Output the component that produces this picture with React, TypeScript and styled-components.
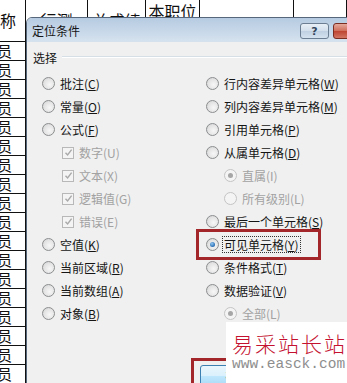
import React from "react";
import styled, { createGlobalStyle, css } from "styled-components";

const GlobalStyle = createGlobalStyle`
  html, body { margin: 0; padding: 0; background: #fff; }
  body { font-family: "Noto Sans CJK SC", "Noto Sans", sans-serif; }
`;

const Page = styled.div`
  position: relative;
  width: 347px;
  height: 383px;
  overflow: hidden;
  background: #fff;
`;

/* spreadsheet behind the dialog */
const Sheet = styled.div`
  display: grid;
  grid-template-columns: 26px 62px 58px 54px 94px 1fr;
  grid-template-rows: 42px;
  grid-auto-rows: 19px;
`;

const Cell = styled.div<{ $head?: boolean; $left?: boolean }>`
  box-sizing: border-box;
  border-right: 1px solid #111;
  border-bottom: 1px solid #111;
  overflow: hidden;
  white-space: nowrap;
  color: #111;
  font-size: 15px;
  line-height: 18px;
  text-indent: -3px;
  ${(p) =>
    p.$head &&
    css`
      display: flex;
      flex-direction: column;
      justify-content: center;
      align-items: ${p.$left ? "flex-start" : "center"};
      font-size: 16px;
      line-height: 19px;
      text-indent: 0;
    `}
`;

/* the dialog */
const Dialog = styled.div`
  position: absolute;
  left: 26px;
  top: 17px;
  width: 352px;
  height: 400px;
  box-sizing: border-box;
  border: 1px solid #56677b;
  border-radius: 6px 6px 0 0;
  background: #f0f0f0;
  display: flex;
  flex-direction: column;
`;

const TitleBar = styled.div`
  height: 24px;
  display: flex;
  align-items: flex-start;
  gap: 4px;
  padding: 0 1px 0 5px;
  border-radius: 5px 5px 0 0;
  background: linear-gradient(#b6cbe1, #c9d9ea 60%, #d6e2ee);
`;

const Title = styled.div`
  flex: 1;
  margin-top: 6px;
  font-size: 12px;
  line-height: 14px;
  color: #151515;
`;

const CaptionButton = styled.div<{ $close?: boolean }>`
  margin-top: 5px;
  width: ${(p) => (p.$close ? 43 : 29)}px;
  height: 16px;
  box-sizing: border-box;
  border: 1px solid ${(p) => (p.$close ? "#7b2d22" : "#6c7e92")};
  border-radius: 3px;
  display: flex;
  align-items: center;
  justify-content: center;
  font-family: "DejaVu Sans", sans-serif;
  font-size: 11px;
  font-weight: bold;
  color: #33465c;
  background: ${(p) =>
    p.$close
      ? "linear-gradient(#e4a99b, #cf6d5a 50%, #bd4330 50%, #d27563)"
      : "linear-gradient(#e8eff6, #d2dfec 50%, #bfd0e2 50%, #d5e2ef)"};
`;

const Body = styled.div`
  flex: 1;
  padding-top: 8px;
`;

const GroupHead = styled.div`
  display: flex;
  align-items: center;
  gap: 5px;
  height: 14px;
  padding-left: 6px;
  font-size: 12px;
  color: #151515;
  &::after {
    content: "";
    flex: 1;
    border-top: 1px solid #d5dfe5;
    border-bottom: 1px solid #fff;
  }
`;

const Options = styled.div`
  display: flex;
  margin-top: 8px;
  padding-left: 15px;
`;

const Column = styled.div<{ $width?: number }>`
  display: flex;
  flex-direction: column;
  width: ${(p) => (p.$width ? `${p.$width}px` : "auto")};
`;

const Option = styled.div<{ $indent?: number; $disabled?: boolean; $marked?: boolean }>`
  position: relative;
  height: 23px;
  display: flex;
  align-items: center;
  gap: 5px;
  padding-left: ${(p) => p.$indent ?? 0}px;
  font-size: 12px;
  line-height: 15px;
  white-space: nowrap;
  color: ${(p) => (p.$disabled ? "#a2a2a2" : "#151515")};
  ${(p) =>
    p.$marked &&
    css`
      &::before {
        content: "";
        position: absolute;
        left: -10px;
        top: -4px;
        width: 125px;
        height: 31px;
        box-sizing: border-box;
        border: 3px solid #a3262b;
      }
    `}
`;

const Radio = styled.span<{ $checked?: boolean; $disabled?: boolean }>`
  position: relative;
  flex: none;
  width: 13px;
  height: 13px;
  box-sizing: border-box;
  border-radius: 50%;
  border: 1px solid ${(p) => (p.$disabled ? "#c4c4c4" : "#8b8d8f")};
  background: ${(p) =>
    p.$disabled
      ? "#f4f4f4"
      : "radial-gradient(circle at 60% 60%, #f7f7f7 0, #e4e4e4 55%, #cfcfcf 100%)"};
  ${(p) =>
    p.$checked &&
    css`
      &::after {
        content: "";
        position: absolute;
        left: 3px;
        top: 3px;
        width: 5px;
        height: 5px;
        border-radius: 50%;
        background: ${p.$disabled
          ? "#a6a6a6"
          : "radial-gradient(circle at 40% 35%, #8fc6f2, #2a6db3 70%, #1c4f8a)"};
      }
    `}
`;

const CheckBox = styled.span`
  flex: none;
  width: 12px;
  height: 12px;
  box-sizing: border-box;
  border: 1px solid #b8b8b8;
  background: #f4f4f4;
  display: flex;
  align-items: center;
  justify-content: center;
`;

const Label = styled.span<{ $focused?: boolean }>`
  ${(p) =>
    p.$focused &&
    css`
      margin-left: -2px;
      padding: 0 1px;
      border: 1px dotted #333;
    `}
`;

const Key = styled.span`
  text-decoration: underline;
  text-underline-offset: 1px;
`;

const ButtonRow = styled.div`
  display: flex;
  margin-top: 33px;
  padding-left: 164px;
`;

const RedFrame = styled.div`
  border: 3px solid #a3262b;
  padding: 4px 6px;
`;

const PushButton = styled.div`
  width: 75px;
  height: 23px;
  box-sizing: border-box;
  border: 1px solid #3c7fb1;
  border-radius: 3px;
  background: linear-gradient(#eaf6fd, #d9f0fc 50%, #bee6fd 50%, #a7d9f5);
  font-size: 12px;
  display: flex;
  align-items: center;
  justify-content: center;
`;

/* watermark pasted over the corner */
const Watermark = styled.div`
  position: absolute;
  right: 0;
  bottom: 0;
  width: 121px;
  height: 61px;
  box-sizing: border-box;
  padding: 9px 0 0 6px;
  background: #fff;
  white-space: nowrap;
`;

const MarkTitle = styled.div`
  font-size: 21px;
  font-weight: 300;
  line-height: 24px;
  letter-spacing: 2px;
  color: #c4112f;
`;

const MarkUrl = styled.div`
  font-family: "Liberation Mono", monospace;
  font-size: 14.5px;
  line-height: 18px;
  color: #8e8e8e;
`;

type Opt = {
  text: string;
  key: string;
  kind: "radio" | "check";
  indent?: number;
  disabled?: boolean;
  checked?: boolean;
  focused?: boolean;
  marked?: boolean;
};

const leftOptions: Opt[] = [
  { text: "批注", key: "C", kind: "radio" },
  { text: "常量", key: "O", kind: "radio" },
  { text: "公式", key: "F", kind: "radio" },
  { text: "数字", key: "U", kind: "check", indent: 20, disabled: true, checked: true },
  { text: "文本", key: "X", kind: "check", indent: 20, disabled: true, checked: true },
  { text: "逻辑值", key: "G", kind: "check", indent: 20, disabled: true, checked: true },
  { text: "错误", key: "E", kind: "check", indent: 20, disabled: true, checked: true },
  { text: "空值", key: "K", kind: "radio" },
  { text: "当前区域", key: "R", kind: "radio" },
  { text: "当前数组", key: "A", kind: "radio" },
  { text: "对象", key: "B", kind: "radio" },
];

const rightOptions: Opt[] = [
  { text: "行内容差异单元格", key: "W", kind: "radio" },
  { text: "列内容差异单元格", key: "M", kind: "radio" },
  { text: "引用单元格", key: "P", kind: "radio" },
  { text: "从属单元格", key: "D", kind: "radio" },
  { text: "直属", key: "I", kind: "radio", indent: 18, disabled: true, checked: true },
  { text: "所有级别", key: "L", kind: "radio", indent: 18, disabled: true },
  { text: "最后一个单元格", key: "S", kind: "radio" },
  { text: "可见单元格", key: "Y", kind: "radio", checked: true, focused: true, marked: true },
  { text: "条件格式", key: "T", kind: "radio" },
  { text: "数据验证", key: "V", kind: "radio" },
  { text: "全部", key: "L", kind: "radio", indent: 18, disabled: true, checked: true },
];

const OptionItem = ({ opt }: { opt: Opt }) => (
  <Option $indent={opt.indent} $disabled={opt.disabled} $marked={opt.marked}>
    {opt.kind === "radio" ? (
      <Radio $checked={opt.checked} $disabled={opt.disabled} />
    ) : (
      <CheckBox>
        <svg width="9" height="9" viewBox="0 0 9 9">
          <polyline points="1.5,4.8 3.6,7 7.6,1.6" fill="none" stroke="#a9a9a9" strokeWidth="1.4" />
        </svg>
      </CheckBox>
    )}
    <Label $focused={opt.focused}>
      {opt.text}(
      {opt.disabled ? opt.key : <Key>{opt.key}</Key>})
    </Label>
  </Option>
);

const headers = [
  { lines: ["称"], left: true },
  { lines: ["行测"] },
  { lines: ["总成绩"] },
  { lines: ["本职位", "排名"] },
  { lines: [""] },
  { lines: [""] },
];

const App = () => {
  const rows = Array.from({ length: 18 });
  return (
    <>
      <GlobalStyle />
      <Page>
        <Sheet>
          {headers.map((h, i) => (
            <Cell key={`h${i}`} $head $left={h.left}>
              {h.lines.map((l, j) => (
                <span key={j}>{l}</span>
              ))}
            </Cell>
          ))}
          {rows.map((_, r) =>
            headers.map((_, c) => <Cell key={`${r}-${c}`}>{c === 0 ? "员" : ""}</Cell>)
          )}
        </Sheet>

        <Dialog>
          <TitleBar>
            <Title>定位条件</Title>
            <CaptionButton>?</CaptionButton>
            <CaptionButton $close />
          </TitleBar>
          <Body>
            <GroupHead>选择</GroupHead>
            <Options>
              <Column $width={164}>
                {leftOptions.map((o) => (
                  <OptionItem key={o.text} opt={o} />
                ))}
              </Column>
              <Column>
                {rightOptions.map((o) => (
                  <OptionItem key={o.text} opt={o} />
                ))}
              </Column>
            </Options>
            <ButtonRow>
              <RedFrame>
                <PushButton>确定</PushButton>
              </RedFrame>
            </ButtonRow>
          </Body>
        </Dialog>

        <Watermark>
          <MarkTitle>易采站长站</MarkTitle>
          <MarkUrl>www.easck.com</MarkUrl>
        </Watermark>
      </Page>
    </>
  );
};

export default App;
